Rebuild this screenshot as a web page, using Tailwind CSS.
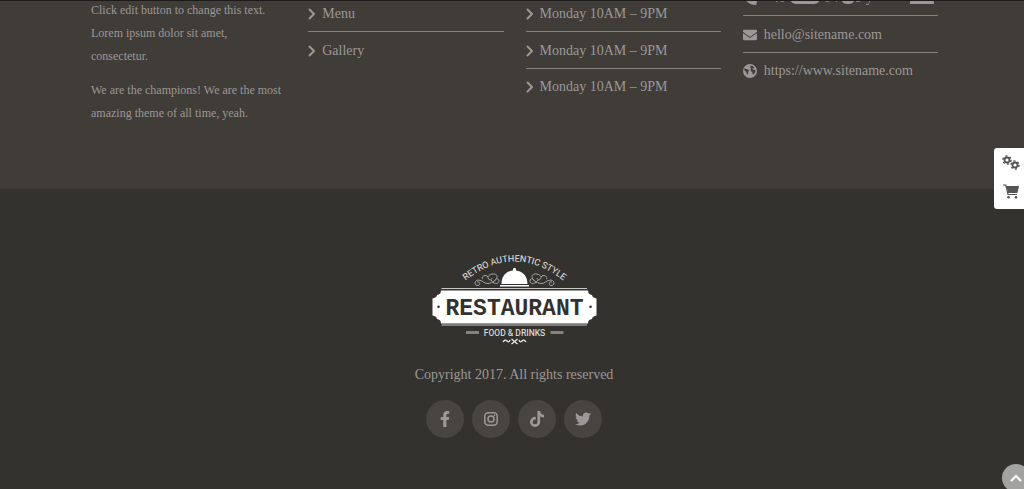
<!DOCTYPE html>
<html lang="en">
<head>
    <meta charset="UTF-8">
    <meta name="viewport" content="width=device-width, initial-scale=1.0">
    <title>Restaurant</title>
    <script src="https://cdn.jsdelivr.net/npm/@tailwindcss/browser@4"></script>
</head>
<body class="min-h-screen flex flex-col bg-[#34322e] text-[#9b9997] font-['Liberation_Serif',serif] text-sm overflow-x-hidden">
    <!-- Icon sprite -->
    <svg class="hidden">
        <symbol id="angle" viewBox="0 0 8 12"><path d="M1.500 1.500 6 6l-4.500 4.500" fill="none" stroke="currentColor" stroke-width="2" stroke-linecap="round" stroke-linejoin="round"/></symbol>
    </svg>

    <!-- Widgets -->
    <section class="bg-[#403c37] border-t border-[#1c1b1a] overflow-hidden pl-[91px] pr-[86px] pb-16">
        <div class="grid grid-cols-4 gap-[22px]">
            <div class="text-[12px] leading-[23px] -mt-[2px]">
                <p>Click edit button to change this text. Lorem ipsum dolor sit amet, consectetur.</p>
                <p class="mt-[11px]">We are the champions! We are the most amazing theme of all time, yeah.</p>
            </div>
            <ul class="-mt-[6px]">
                <li class="h-[37px] border-b border-[#85817d]"><a href="#" class="flex h-full items-center gap-[6px] pt-[2px]"><svg class="w-2 h-3"><use href="#angle"/></svg>Menu</a></li>
                <li class="h-[37px]"><a href="#" class="flex h-full items-center gap-[6px]"><svg class="w-2 h-3"><use href="#angle"/></svg>Gallery</a></li>
            </ul>
            <ul class="-mt-[6px]">
                <li class="flex h-[37px] items-center gap-[6px] pt-[2px] border-b border-[#85817d]"><svg class="w-2 h-3"><use href="#angle"/></svg>Monday 10AM – 9PM</li>
                <li class="flex h-[37px] items-center gap-[6px] pt-[2px] border-b border-[#85817d]"><svg class="w-2 h-3"><use href="#angle"/></svg>Monday 10AM – 9PM</li>
                <li class="flex h-9 items-center gap-[6px]"><svg class="w-2 h-3"><use href="#angle"/></svg>Monday 10AM – 9PM</li>
            </ul>
            <ul class="-mt-[22px]">
                <li class="h-[37px] border-b border-[#85817d]">
                    <a href="#" class="flex h-full items-center gap-[7px] pt-[2px]">
                        <svg class="size-[14px]" viewBox="0 0 512 512" fill="currentColor"><path d="M18.600 24.600l104-24c11.300-2.600 22.900 3.300 27.500 13.900l48 112c4.200 9.800 1.400 21.300-6.900 28l-60.600 49.600c36 76.700 98.900 140.500 177.200 177.200l49.600-60.600c6.800-8.300 18.200-11.100 28-6.900l112 48c10.700 4.700 16.600 16.300 14 27.600l-24 104C484.900 504.200 475.300 512 464 512 207.900 512 0 304.500 0 48c0-11.200 7.700-20.900 18.600-23.400z"/></svg>
                        <span class="flex flex-1 items-end">+40<span class="w-[30px] h-3 mb-1 mx-1 rounded-full bg-current"></span>0 7<span class="w-[14px] h-3 mb-1 rounded-full bg-current"></span>9 y<span class="w-6 h-3 mb-1 ml-auto mr-1 rounded-t-full bg-current"></span></span>
                    </a>
                </li>
                <li class="h-[37px] border-b border-[#85817d]"><a href="#" class="flex h-full items-center gap-[7px] pt-[2px]"><svg class="size-[14px]" viewBox="0 0 512 512" fill="currentColor"><path d="M502.300 190.800c3.900-3.100 9.700-.2 9.700 4.700V400c0 26.500-21.500 48-48 48H48c-26.500 0-48-21.500-48-48V195.600c0-5 5.700-7.800 9.700-4.700 22.400 17.400 52.100 39.500 154.100 113.600 21.100 15.400 56.700 47.800 92.200 47.600 35.700.3 72-32.800 92.300-47.600 102-74.100 131.600-96.300 154-113.700zM256 320c23.200.4 56.600-29.200 73.400-41.400 132.700-96.300 142.800-104.700 173.400-128.700 5.800-4.500 9.200-11.500 9.200-18.900v-19c0-26.500-21.500-48-48-48H48c-26.500 0-48 21.500-48 48v19c0 7.400 3.400 14.300 9.200 18.900 30.600 23.900 40.700 32.400 173.400 128.700 16.800 12.200 50.200 41.800 73.400 41.400z"/></svg>hello@sitename.com</a></li>
                <li class="h-9"><a href="#" class="flex h-full items-center gap-[7px]"><svg class="size-[14px]" viewBox="0 0 14 14"><circle cx="7" cy="7" r="7" fill="currentColor"/><path d="M1.200 4.500 2.500 4.800l2.500.8 1 1.200-.8 1.500-.4 2.600-1.200-1.500L3.200 7.800 1.400 6.500zM7.500 1.500l2.500.7 1.500 1.800-1.700.2-.6 1.100 1.300.4 1.400.1.700 1.300-1 1.800-1 1.600-.9-.4-.4-2.100L8 7.200 7.500 5.700l.6-1.500-.8-.8z" fill="#403c37"/></svg>https://www.sitename.com</a></li>
            </ul>
        </div>
    </section>

    <!-- Footer -->
    <footer class="flex flex-col items-center pt-[61px] pb-12 pl-1">
        <svg class="w-[168px] h-[98px]" viewBox="431 250 168 98" role="img" aria-label="Restaurant">
            <defs><path id="arc" d="M460 286Q515.500 237 571 286"/></defs>
            <text font-family="Roboto, sans-serif" font-size="9" fill="#e8e8e6"><textPath href="#arc" startOffset="50%" text-anchor="middle">RETRO AUTHENTIC STYLE</textPath></text>
            <!-- Cloche -->
            <path d="M502.500 284c0-8 5-13 11.500-13.500v-1.300a1.500 1.500 0 1 1 3 0v1.300c6.500.5 11.500 5.500 11.500 13.500zM501 285h29v1.500h-29z" fill="#fff"/>
            <!-- Scrolls -->
            <g fill="none" stroke="#a9a7a3">
                <path id="scroll" d="M478 282c3-1 4 3 1 3.500-4 .3-4-5 0-5.500 5 0 6 4 10 3.500 5-.5 9-4 9-7 0-4-9-3-9 1 0 3 4 3 4 .5M489 277c-3-4-8 1-5 2M492 280c3 5 8 4 8 1s-4-3-4 0"/>
                <use href="#scroll" transform="matrix(-1 0 0 1 1031 0)"/>
            </g>
            <!-- Banner -->
            <path d="M442.500 288.500H588M442.500 325H588" stroke="#c9c8c6"/>
            <path d="M442 290.500h147c0 3 1.500 4 4 4.500 0 2 2 3 4.500 3.500v17c-2.500.5-4.500 1.500-4.500 3.500-2.500.5-4 1.500-4 4.500H442c0-3-1.500-4-4-4.500 0-2-2-3-4.500-3.500v-17c2.500-.5 4.500-1.500 4.500-3.500 2.500-.5 4-1.500 4-4.500z" fill="#fff"/>
            <circle cx="439.500" cy="306.700" r="1.300" fill="#34322e"/>
            <circle cx="591.500" cy="306.700" r="1.300" fill="#34322e"/>
            <text x="515.500" y="314.500" text-anchor="middle" font-family="Liberation Mono, monospace" font-size="23" font-weight="700" fill="#34322e">RESTAURANT</text>
            <text x="515.500" y="335.500" text-anchor="middle" font-family="Roboto, sans-serif" font-size="8.500" font-weight="500" fill="#d8d7d5">FOOD &amp; DRINKS</text>
            <path d="M467 332.500h13M551.500 332.500h13" stroke="#84827e" stroke-width="3"/>
            <path d="M504 342q2-3 4-1t3-1M527 342q-2-3-4-1t-3-1M512.500 339l6 5M518.500 339l-6 5" fill="none" stroke="#e8e8e6" stroke-width="1.300"/>
        </svg>
        <p class="mt-[17px]">Copyright 2017. All rights reserved</p>
        <div class="flex gap-2 mt-[15px]">
            <a href="#" aria-label="Facebook" class="size-[38px] rounded-full bg-[#484540] flex items-center justify-center"><svg class="size-4" viewBox="0 0 320 512" fill="currentColor"><path d="M279.140 288l14.220-92.660h-88.910v-60.130c0-25.350 12.420-50.060 52.240-50.060h40.420V6.260S260.430 0 225.360 0c-73.220 0-121.080 44.380-121.080 124.720v70.620H22.890V288h81.390v224h100.170V288z"/></svg></a>
            <a href="#" aria-label="Instagram" class="size-[38px] rounded-full bg-[#484540] flex items-center justify-center"><svg class="size-4" viewBox="0 0 16 16" fill="none" stroke="currentColor" stroke-width="1.500"><rect x="1.800" y="1.800" width="12.400" height="12.400" rx="3.500"/><circle cx="8" cy="8" r="3"/><circle cx="11.600" cy="4.400" r=".8" fill="currentColor" stroke="none"/></svg></a>
            <a href="#" aria-label="TikTok" class="size-[38px] rounded-full bg-[#484540] flex items-center justify-center"><svg class="size-4" viewBox="0 0 448 512" fill="currentColor"><path d="M448 209.910a210.060 210.060 0 0 1-122.770-39.250V349.380A162.550 162.550 0 1 1 185 188.310V278.200a74.620 74.620 0 1 0 52.230 71.180V0l88 0a121.180 121.180 0 0 0 1.860 22.170A122.180 122.180 0 0 0 381 102.390a121.430 121.430 0 0 0 67 20.140z"/></svg></a>
            <a href="#" aria-label="Twitter" class="size-[38px] rounded-full bg-[#484540] flex items-center justify-center"><svg class="size-4" viewBox="0 0 512 512" fill="currentColor"><path d="M459.370 151.716c.325 4.548.325 9.097.325 13.645 0 138.720-105.583 298.558-298.558 298.558-59.452 0-114.680-17.219-161.137-47.106 8.447.974 16.568 1.299 25.340 1.299 49.055 0 94.213-16.568 130.274-44.832-46.132-.975-84.792-31.188-98.112-72.772 6.498.974 12.995 1.624 19.818 1.624 9.421 0 18.843-1.300 27.614-3.573-48.081-9.747-84.143-51.980-84.143-102.985v-1.299c13.969 7.797 30.214 12.670 47.431 13.319-28.264-18.843-46.781-51.005-46.781-87.391 0-19.492 5.197-37.360 14.294-52.954 51.655 63.675 129.300 105.258 216.365 109.807-1.624-7.797-2.599-15.918-2.599-24.040 0-57.828 46.782-104.934 104.934-104.934 30.213 0 57.502 12.670 76.670 33.137 23.715-4.548 46.456-13.320 66.599-25.340-7.798 24.366-24.366 44.833-46.132 57.827 21.117-2.273 41.584-8.122 60.426-16.243-14.292 20.791-32.161 39.308-52.628 54.253z"/></svg></a>
        </div>
    </footer>

    <!-- Side tools -->
    <div class="fixed right-0 top-[148px] w-[30px] rounded-l-[3px] bg-white text-[#555] flex flex-col items-center gap-[14px] pt-[6px] pb-[10px] pl-1">
        <button type="button" aria-label="Settings"><svg class="block w-[18px] h-4" viewBox="0 0 18 16" fill="none" stroke="currentColor"><circle cx="5" cy="6" r="2.500" stroke-width="1.800"/><circle cx="5" cy="6" r="4" stroke-width="1.500" stroke-dasharray="2 2.190"/><circle cx="13" cy="11" r="2.500" stroke-width="1.800"/><circle cx="13" cy="11" r="4" stroke-width="1.500" stroke-dasharray="2 2.190"/></svg></button>
        <button type="button" aria-label="Cart"><svg class="block w-4 h-[15px]" viewBox="0 0 16 15"><path d="M0 1h2.800l2.200 9.500h9" fill="none" stroke="currentColor" stroke-width="1.200"/><path d="M3.500 2H16l-1.500 7H5z" fill="currentColor"/><circle cx="5.500" cy="13.300" r="1.300" fill="currentColor"/><circle cx="13" cy="13.300" r="1.300" fill="currentColor"/></svg></button>
    </div>
    <button type="button" aria-label="Back to top" class="fixed -right-[6px] -bottom-[3px] size-[28px] rounded-full bg-[#a3a3a2] text-white flex items-center justify-center"><svg class="w-3 h-2" viewBox="0 0 12 8"><path d="M1 7 6 2l5 5" fill="none" stroke="currentColor" stroke-width="2.200"/></svg></button>
</body>
</html>
